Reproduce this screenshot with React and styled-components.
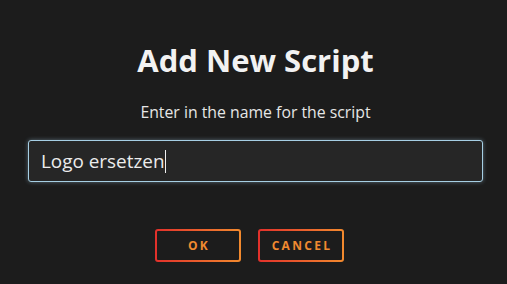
import React from "react";
import styled, { createGlobalStyle } from "styled-components";

const Global = createGlobalStyle`
  html, body { margin: 0; padding: 0; background: #1c1c1c; }
  body { font-family: "Open Sans", "Noto Sans", sans-serif; }
`;

const Dialog = styled.div`
  width: 507px;
  height: 284px;
  box-sizing: border-box;
  background: #1c1c1c;
  display: flex;
  flex-direction: column;
  align-items: center;
  padding: 40px 24px 0 28px;
`;

const Title = styled.h1`
  margin: 0;
  font-size: 31px;
  font-weight: 700;
  color: #f2f2f2;
  line-height: 40px;
`;

const Subtitle = styled.p`
  margin: 22px 0 0;
  font-size: 15.8px;
  color: #e6e6e6;
  line-height: 20px;
`;

const Input = styled.div`
  margin-top: 18px;
  align-self: stretch;
  height: 42px;
  box-sizing: border-box;
  border: 1.5px solid #a6cfe4;
  border-radius: 3px;
  background: #262626;
  box-shadow: 0 0 4px rgba(166, 207, 228, 0.45);
  display: flex;
  align-items: center;
  padding-left: 12px;
  font-size: 18.9px;
  color: #ececec;
`;

const Caret = styled.span`
  display: inline-block;
  width: 1px;
  height: 23px;
  background: #f0f0f0;
  margin-left: 1px;
`;

const Buttons = styled.div`
  margin-top: 47px;
  display: flex;
  gap: 17px;
  margin-right: 12px;
`;

const Button = styled.button`
  width: 86px;
  height: 33px;
  box-sizing: border-box;
  border: 2px solid transparent;
  border-radius: 3px;
  background: linear-gradient(#1c1c1c, #1c1c1c) padding-box,
    linear-gradient(90deg, #e2302b, #f28a2e) border-box;
  color: #f08a30;
  font-family: "Open Sans", "Noto Sans", sans-serif;
  font-weight: 700;
  font-size: 12px;
  letter-spacing: 2.3px;
  padding: 0 0 0 2px;
  cursor: pointer;
`;

export default function App() {
  return (
    <>
      <Global />
      <Dialog>
        <Title>Add New Script</Title>
        <Subtitle>Enter in the name for the script</Subtitle>
        <Input>
          Logo ersetzen
          <Caret />
        </Input>
        <Buttons>
          <Button>OK</Button>
          <Button>CANCEL</Button>
        </Buttons>
      </Dialog>
    </>
  );
}
